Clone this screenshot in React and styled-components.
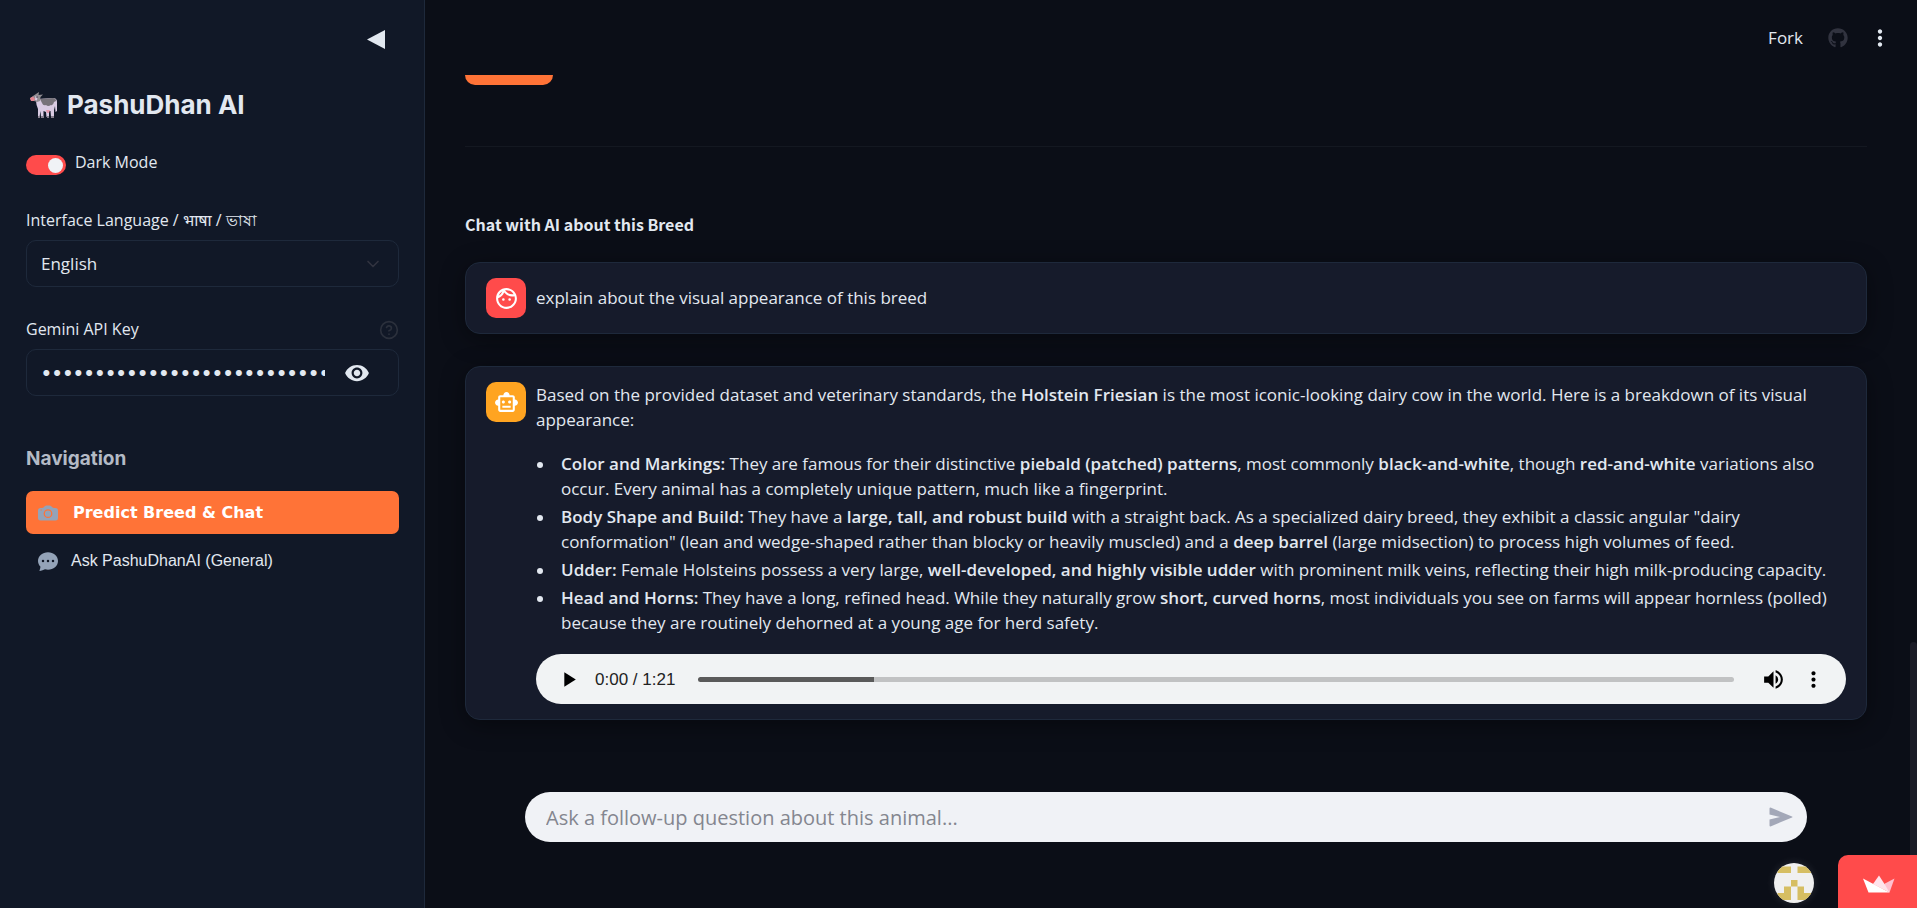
import React from "react";
import styled, { createGlobalStyle } from "styled-components";
import { BsCameraFill, BsChatDotsFill } from "react-icons/bs";
import { MdOutlineFace, MdOutlineSmartToy, MdPlayArrow, MdVolumeUp, MdMoreVert, MdVisibility } from "react-icons/md";
import { FaGithub } from "react-icons/fa";
import { ChevronDown, CircleHelp } from "lucide-react";

const GlobalStyle = createGlobalStyle`
  *, *::before, *::after { box-sizing: border-box; }
  body {
    margin: 0;
    background: #0b0e17;
    color: #e2e8f0;
    font: 400 17px/25px "Open Sans", "Noto Sans", sans-serif;
  }
  button, input, select { font: inherit; color: inherit; }
  button { border: 0; padding: 0; background: none; cursor: pointer; }
  strong { font-weight: 600; }
`;

const Shell = styled.div`
  display: flex;
  height: 100vh;
  overflow: hidden;
`;

/* Sidebar */
const Sidebar = styled.aside`
  flex: 0 0 425px;
  padding: 26px 25px 0 26px;
  background: #111827;
  border-right: 1px solid #1e293b;
`;
const SidebarTop = styled.div`
  display: flex;
  justify-content: flex-end;
  height: 60px;
  padding-right: 14px;
`;
const CollapseButton = styled.button`
  width: 18px;
  height: 26px;
  svg { display: block; }
`;
const Brand = styled.h1`
  display: flex;
  align-items: center;
  gap: 9px;
  margin: 0;
  padding-left: 4px;
  font-family: Inter, sans-serif;
  font-size: 26px;
  line-height: 38px;
  font-weight: 700;
`;
const ToggleLabel = styled.label`
  display: flex;
  gap: 9px;
  height: 25px;
  margin-top: 26px;
  font-size: 16px;
`;
const Toggle = styled.input`
  appearance: none;
  flex: none;
  width: 40px;
  height: 20px;
  margin: 5px 0 0;
  padding: 3px;
  border-radius: 10px;
  background: #ff4b4b;
  &::before {
    content: "";
    display: block;
    width: 15px;
    height: 15px;
    margin-left: auto;
    border-radius: 50%;
    background: #f0f2f6;
  }
`;
const Field = styled.div`
  margin-top: ${(p) => p.$gap}px;
`;
const FieldHead = styled.div`
  display: flex;
  align-items: center;
  justify-content: space-between;
  height: 25px;
  margin-bottom: 7px;
  font-size: 16px;
  svg { color: #2b303c; }
`;
const FieldBox = styled.div`
  display: flex;
  align-items: center;
  height: 47px;
  padding: 0 15px 0 14px;
  border: 1px solid #1e293b;
  border-radius: 10px;
`;
const Select = styled.select`
  appearance: none;
  flex: 1;
  border: 0;
  padding: 0;
  background: none;
  outline: none;
`;
const FieldIcon = styled.span`
  display: flex;
  color: #31333f;
`;
const KeyInput = styled.input`
  flex: 0 0 284px;
  min-width: 0;
  border: 0;
  padding: 0;
  background: none;
  outline: none;
  font-family: Inter, sans-serif;
  font-size: 19px;
`;
const EyeButton = styled.button`
  display: flex;
  margin-left: 19px;
`;
const NavTitle = styled.h2`
  margin: 50px 0 19px;
  font-family: Inter, sans-serif;
  font-size: 19px;
  line-height: 26px;
  font-weight: 700;
  color: #b4bac5;
`;
const Nav = styled.nav`
  display: flex;
  flex-direction: column;
  gap: 5px;
`;
const NavItem = styled.a`
  display: flex;
  align-items: center;
  gap: ${(p) => (p.$active ? 15 : 13)}px;
  height: 43px;
  padding: 0 12px;
  border-radius: 7px;
  background: ${(p) => (p.$active ? "#ff7337" : "transparent")};
  color: ${(p) => (p.$active ? "#fff" : "#e2e8f0")};
  font-family: ${(p) => (p.$active ? '"DejaVu Sans", sans-serif' : '"Liberation Sans", Arial, sans-serif')};
  font-size: 16px;
  font-weight: ${(p) => (p.$active ? 700 : 400)};
  text-decoration: none;
  svg { color: #94a3b8; }
`;

/* Main column */
const Main = styled.main`
  position: relative;
  flex: 1;
  min-width: 0;
  display: flex;
  flex-direction: column;
`;
const TopBar = styled.header`
  flex: 0 0 75px;
  display: flex;
  align-items: center;
  justify-content: flex-end;
  padding-right: 24px;
`;
const ForkLink = styled.a`
  margin-right: 25px;
  color: inherit;
  text-decoration: none;
`;
const IconButton = styled.button`
  display: flex;
  color: ${(p) => p.$color || "inherit"};
`;
const RepoButton = styled(IconButton)`
  margin-right: 19px;
`;
const Content = styled.div`
  flex: 1;
  min-height: 0;
  overflow: hidden;
  padding: 0 50px 0 40px;
`;
const PredictButton = styled.button`
  display: block;
  width: 88px;
  height: 50px;
  margin-top: -40px;
  border-radius: 10px;
  background: #ff7337;
`;
const Divider = styled.hr`
  height: 1px;
  margin: 61px 0 64px;
  border: 0;
  background: #141821;
`;
const ChatTitle = styled.h3`
  margin: 0 0 25px;
  font: 700 16px/26px "Noto Sans CJK SC", sans-serif;
`;
const Message = styled.article`
  display: flex;
  gap: 10px;
  margin-bottom: 32px;
  padding: 15px 20px;
  border: 1px solid #1e293b;
  border-radius: 15px;
  background: #161b2b;
  box-shadow: 0 5px 25px rgba(0, 0, 0, 0.4);
`;
const Avatar = styled.div`
  flex: none;
  display: flex;
  align-items: center;
  justify-content: center;
  width: 40px;
  height: 40px;
  border-radius: 10px;
  background: ${(p) => p.$bg};
  color: #fff;
`;
const MessageBody = styled.div`
  flex: 1;
  min-width: 0;
  p { margin: 0; }
`;
const UserText = styled.p`
  line-height: 40px;
`;
const Bullets = styled.ul`
  margin: 19px 0;
  padding-left: 25px;
  list-style: none;
  li + li { margin-top: 3px; }
  li::before {
    content: "";
    display: inline-block;
    width: 6px;
    height: 6px;
    margin: 0 18px 0 -24px;
    border-radius: 50%;
    background: currentColor;
    vertical-align: middle;
  }
`;
const Player = styled.div`
  display: flex;
  align-items: center;
  height: 50px;
  padding: 0 20px;
  border-radius: 25px;
  background: #f1f3f4;
  color: #000;
`;
const PlayerTime = styled.span`
  margin: 0 23px 0 14px;
  color: #222;
  font-family: "Liberation Sans", Arial, sans-serif;
`;
const Seek = styled.input`
  appearance: none;
  flex: 1;
  min-width: 0;
  height: 5px;
  margin: 0 27px 0 0;
  border-radius: 3px;
  background: linear-gradient(to right, #5a5a5a 17%, #c1c2c3 17%);
  &::-webkit-slider-thumb { appearance: none; width: 0; height: 0; }
`;
const VolumeButton = styled(IconButton)`
  margin-right: 15px;
`;
const ComposerBar = styled.form`
  flex: none;
  display: flex;
  margin: 0 110px 66px 100px;
  height: 50px;
  padding: 0 14px 0 21px;
  align-items: center;
  border-radius: 25px;
  background: #f0f2f6;
`;
const ComposerInput = styled.input`
  flex: 1;
  min-width: 0;
  border: 0;
  padding: 0;
  background: none;
  outline: none;
  color: #31333f;
  font-size: 20px;
  &::placeholder { color: #84868f; opacity: 1; }
`;
const ScrollThumb = styled.div`
  position: absolute;
  right: 0;
  top: 642px;
  bottom: 0;
  width: 7px;
  border-radius: 4px 4px 0 0;
  background: #1b1c27;
`;
const Badges = styled.div`
  position: absolute;
  right: 0;
  bottom: 0;
  display: flex;
  align-items: flex-end;
  gap: 24px;
`;
const ProfileBadge = styled.a`
  height: 40px;
  margin-bottom: 5px;
  border-radius: 50%;
  box-shadow: 0 0 10px rgba(255, 255, 255, 0.12);
`;
const HostBadge = styled.a`
  display: flex;
  align-items: center;
  justify-content: center;
  width: 79px;
  height: 53px;
  padding: 4px 0 0 2px;
  border-radius: 10px 0 0 0;
  background: #ff4b4b;
`;

function Cow() {
  return (
    <svg width="28" height="26" viewBox="0 0 28 26" aria-hidden="true">
      <path d="M8 7 L23 6 Q27 6 27 10 L27 19 L25.500 20 L25 14 L24 18 L24 25 L21 25 L20.500 19 L19 19 L19 25 L16.500 25 L16 20 L13.500 19 L13.500 25 L11 25 L10.500 19 L9.500 25 L8 25 L8 17 Q6 12 6 9Z" fill="#d9cbe3" />
      <path d="M10 7 L23 6 Q26 6 26 9 L24 10 Q23 14 21 13 Q18 15 16 13 Q13 14 12 11Z" fill="#77737a" />
      <path d="M3 4 L6 2 L9 0 L8.500 3 L13 2.500 L10.500 5 L10 9 L7 10 L4 9 L1 8.500 L0 6.500Z" fill="#918d92" />
      <path d="M0 6 L3 4.500 L5 7 L4 9 L1 9Z" fill="#e38490" />
      <path d="M5.500 4 L7.500 4 L7 8.500 L5 8Z" fill="#d9cbe3" />
      <circle cx="7" cy="5" r="0.800" fill="#2b2430" />
      <path d="M16 18 L20 18 L19 21 L17 21Z" fill="#e59aae" />
      <path d="M8 24 H10 V26 H8Z M11 24 H14 V26 H11Z M17 24 H19 V26 H17Z M21 24 H24 V26 H21Z" fill="#877f8e" />
    </svg>
  );
}

function Identicon() {
  return (
    <svg width="40" height="40" viewBox="0 0 40 40" aria-hidden="true">
      <defs>
        <clipPath id="round"><circle cx="20" cy="20" r="20" /></clipPath>
      </defs>
      <g clipPath="url(#round)">
        <rect width="40" height="40" fill="#f0f0f0" />
        <path d="M3.500 3.500H17V10H3.500Z M23.500 3.500H37V10H23.500Z M17 17H23.500V23.500H17Z M10 23.500H17V37H3.500V30H10Z M23.500 23.500H30V30H37V37H23.500Z" fill="#d6be62" />
      </g>
    </svg>
  );
}

function Crown() {
  return (
    <svg width="34" height="18" viewBox="0 0 34 18" aria-hidden="true">
      <path d="M23 8.500 L32.500 3.500 L27.500 17.500 L20 12Z" fill="#ffc0cf" />
      <path d="M11 9 L17 0.500 L22.500 9 L27.500 17.500Z" fill="#ffe3ec" />
      <path d="M1 3.500 L27.500 17.500 H6.500Z" fill="#fff" />
    </svg>
  );
}

export default function App() {
  return (
    <>
      <GlobalStyle />
      <Shell>
        <Sidebar>
          <SidebarTop>
            <CollapseButton aria-label="Collapse sidebar">
              <svg width="18" height="26" viewBox="0 0 18 26"><path d="M0 13.500 L18 4 V23Z" fill="#e2e8f0" /></svg>
            </CollapseButton>
          </SidebarTop>
          <Brand><Cow />PashuDhan AI</Brand>
          <ToggleLabel><Toggle type="checkbox" role="switch" defaultChecked />Dark Mode</ToggleLabel>
          <Field $gap={33}>
            <FieldHead><label htmlFor="language">Interface Language / भाषा / ভাষা</label></FieldHead>
            <FieldBox>
              <Select id="language" defaultValue="English"><option>English</option></Select>
              <FieldIcon><ChevronDown size={20} /></FieldIcon>
            </FieldBox>
          </Field>
          <Field $gap={30}>
            <FieldHead><label htmlFor="key">Gemini API Key</label><CircleHelp size={20} /></FieldHead>
            <FieldBox>
              <KeyInput id="key" type="password" defaultValue="abcdefghijklmnopqrstuvwxyz0123456789abc" />
              <EyeButton aria-label="Show password"><MdVisibility size={26} /></EyeButton>
            </FieldBox>
          </Field>
          <NavTitle>Navigation</NavTitle>
          <Nav>
            <NavItem href="#predict" $active><BsCameraFill size={20} />Predict Breed &amp; Chat</NavItem>
            <NavItem href="#ask"><BsChatDotsFill size={20} />Ask PashuDhanAI (General)</NavItem>
          </Nav>
        </Sidebar>
        <Main>
          <TopBar>
            <ForkLink href="#fork">Fork</ForkLink>
            <RepoButton aria-label="GitHub" $color="#31333f"><FaGithub size={20} /></RepoButton>
            <IconButton aria-label="Menu"><MdMoreVert size={26} /></IconButton>
          </TopBar>
          <Content>
            <PredictButton aria-label="Predict" />
            <Divider />
            <ChatTitle>Chat with AI about this Breed</ChatTitle>
            <Message>
              <Avatar $bg="#ff4b4b"><MdOutlineFace size={25} /></Avatar>
              <MessageBody><UserText>explain about the visual appearance of this breed</UserText></MessageBody>
            </Message>
            <Message>
              <Avatar $bg="#ffa421"><MdOutlineSmartToy size={25} /></Avatar>
              <MessageBody>
                <p>Based on the provided dataset and veterinary standards, the <strong>Holstein Friesian</strong> is the most iconic-looking dairy cow in the world. Here is a breakdown of its visual appearance:</p>
                <Bullets>
                  <li><strong>Color and Markings:</strong> They are famous for their distinctive <strong>piebald (patched) patterns</strong>, most commonly <strong>black-and-white</strong>, though <strong>red-and-white</strong> variations also occur. Every animal has a completely unique pattern, much like a fingerprint.</li>
                  <li><strong>Body Shape and Build:</strong> They have a <strong>large, tall, and robust build</strong> with a straight back. As a specialized dairy breed, they exhibit a classic angular "dairy conformation" (lean and wedge-shaped rather than blocky or heavily muscled) and a <strong>deep barrel</strong> (large midsection) to process high volumes of feed.</li>
                  <li><strong>Udder:</strong> Female Holsteins possess a very large, <strong>well-developed, and highly visible udder</strong> with prominent milk veins, reflecting their high milk-producing capacity.</li>
                  <li><strong>Head and Horns:</strong> They have a long, refined head. While they naturally grow <strong>short, curved horns</strong>, most individuals you see on farms will appear hornless (polled) because they are routinely dehorned at a young age for herd safety.</li>
                </Bullets>
                <Player>
                  <IconButton aria-label="Play"><MdPlayArrow size={25} /></IconButton>
                  <PlayerTime>0:00 / 1:21</PlayerTime>
                  <Seek type="range" aria-label="Seek" defaultValue={0} />
                  <VolumeButton aria-label="Mute"><MdVolumeUp size={25} /></VolumeButton>
                  <IconButton aria-label="More options"><MdMoreVert size={25} /></IconButton>
                </Player>
              </MessageBody>
            </Message>
          </Content>
          <ComposerBar>
            <ComposerInput aria-label="Follow-up question" placeholder="Ask a follow-up question about this animal..." />
            <IconButton type="submit" aria-label="Send" $color="#a3a8b8">
              <svg width="24" height="20" viewBox="0 0 24 20"><path d="M1.500 0.500 L23 9.500 Q24 10 23 10.500 L1.500 19.500 Q0.500 19.500 0.500 18.500 V12.500 L11 10 L0.500 7.500 V1.500 Q0.500 0.500 1.500 0.500Z" fill="currentColor" /></svg>
            </IconButton>
          </ComposerBar>
          <ScrollThumb />
          <Badges>
            <ProfileBadge href="#profile" aria-label="Author profile"><Identicon /></ProfileBadge>
            <HostBadge href="#host" aria-label="Hosted app"><Crown /></HostBadge>
          </Badges>
        </Main>
      </Shell>
    </>
  );
}
